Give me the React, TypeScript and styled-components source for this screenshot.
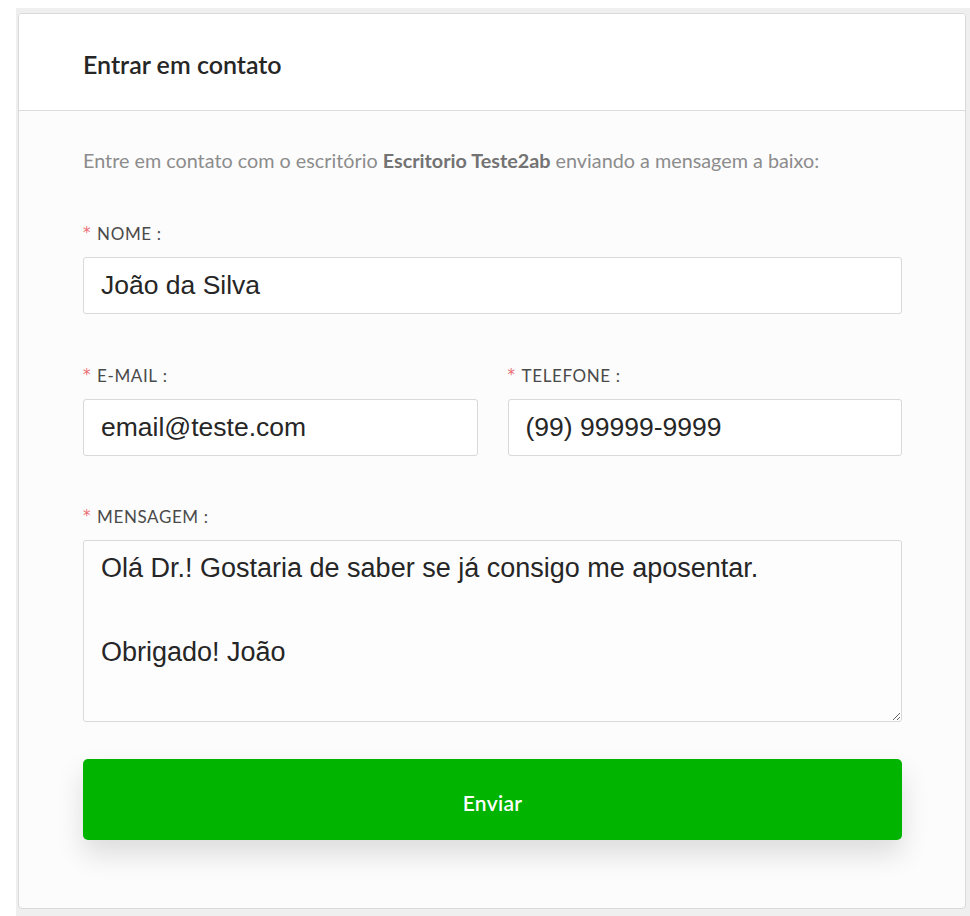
import React from "react";
import styled, { createGlobalStyle } from "styled-components";

const Global = createGlobalStyle`
  html, body { margin: 0; padding: 0; background: #ffffff; }
  body { font-family: "Lato", "Noto Sans", sans-serif; }
  * { box-sizing: border-box; }
`;

const Page = styled.div`
  margin: 8px 0 0 16px;
  padding: 5px 4px 8px 2px;
  background: #efefef;
`;

const Card = styled.div`
  background: #fcfcfd;
  border: 1px solid #d9d9d9;
  border-radius: 4px;
  overflow: hidden;
`;

const Header = styled.div`
  height: 97px;
  display: flex;
  align-items: center;
  padding: 4px 64px 0;
  background: #ffffff;
  border-bottom: 1px solid #dcdcdc;
`;

const Title = styled.h2`
  margin: 0;
  font-family: "Lato", sans-serif;
  font-size: 25px;
  font-weight: 600;
  color: #262626;
`;

const Body = styled.div`
  padding: 36px 63px 68px 64px;
  display: flex;
  flex-direction: column;
`;

const Intro = styled.p`
  margin: 0 0 48px;
  font-size: 19.8px;
  line-height: 26px;
  color: #8c8c8c;
  b { font-weight: 700; color: #737373; }
`;

const Row = styled.div`
  display: grid;
  grid-template-columns: 1fr 1fr;
  column-gap: 30px;
`;

const Field = styled.div<{ $gap?: number }>`
  display: flex;
  flex-direction: column;
  margin-bottom: ${(p) => p.$gap ?? 49}px;
`;

const Label = styled.label`
  display: flex;
  align-items: center;
  height: 24px;
  margin-bottom: 12px;
  font-size: 17px;
  letter-spacing: 0.6px;
  color: #4a4a4a;
  text-transform: uppercase;
`;

const Star = styled.span`
  color: #ee6b70;
  font-family: "DejaVu Sans", sans-serif;
  font-size: 15px;
  margin-right: 6px;
`;

const Colon = styled.span`
  margin-left: 5px;
`;

const Input = styled.input`
  height: 57px;
  width: 100%;
  padding: 0 17px;
  border: 1px solid #d9d9d9;
  border-radius: 3px;
  background: #ffffff;
  font-family: "Liberation Sans", Arial, sans-serif;
  font-size: 26.5px;
  color: #262626;
  outline: none;
`;

const TextArea = styled.textarea`
  height: 182px;
  width: 100%;
  padding: 6px 17px;
  border: 1px solid #d9d9d9;
  border-radius: 3px;
  background: #fdfdfe;
  font-family: "Liberation Sans", Arial, sans-serif;
  font-size: 27px;
  line-height: 42px;
  color: #262626;
  outline: none;
  resize: vertical;
  display: block;
`;

const Button = styled.button`
  height: 81px;
  width: 100%;
  border: none;
  border-radius: 5px;
  background: #00b400;
  color: #ffffff;
  font-family: "Lato", sans-serif;
  font-size: 21px;
  font-weight: 600;
  letter-spacing: 0.3px;
  padding-top: 6px;
  box-shadow: 0 14px 28px rgba(0, 0, 0, 0.13);
  cursor: pointer;
`;

const FieldLabel = ({ text }: { text: string }) => (
  <Label>
    <Star>*</Star>
    {text}
    <Colon>:</Colon>
  </Label>
);

export default function App() {
  return (
    <>
      <Global />
      <Page>
        <Card>
          <Header>
            <Title>Entrar em contato</Title>
          </Header>
          <Body>
            <Intro>
              Entre em contato com o escritório <b>Escritorio Teste2ab</b> enviando a mensagem a baixo:
            </Intro>
            <Field>
              <FieldLabel text="Nome" />
              <Input defaultValue="João da Silva" />
            </Field>
            <Row>
              <Field $gap={48}>
                <FieldLabel text="E-mail" />
                <Input defaultValue="email@teste.com" />
              </Field>
              <Field $gap={48}>
                <FieldLabel text="Telefone" />
                <Input defaultValue="(99) 99999-9999" />
              </Field>
            </Row>
            <Field $gap={37}>
              <FieldLabel text="Mensagem" />
              <TextArea
                defaultValue={"Olá Dr.! Gostaria de saber se já consigo me aposentar.\n\nObrigado! João"}
              />
            </Field>
            <Button type="button">Enviar</Button>
          </Body>
        </Card>
      </Page>
    </>
  );
}
